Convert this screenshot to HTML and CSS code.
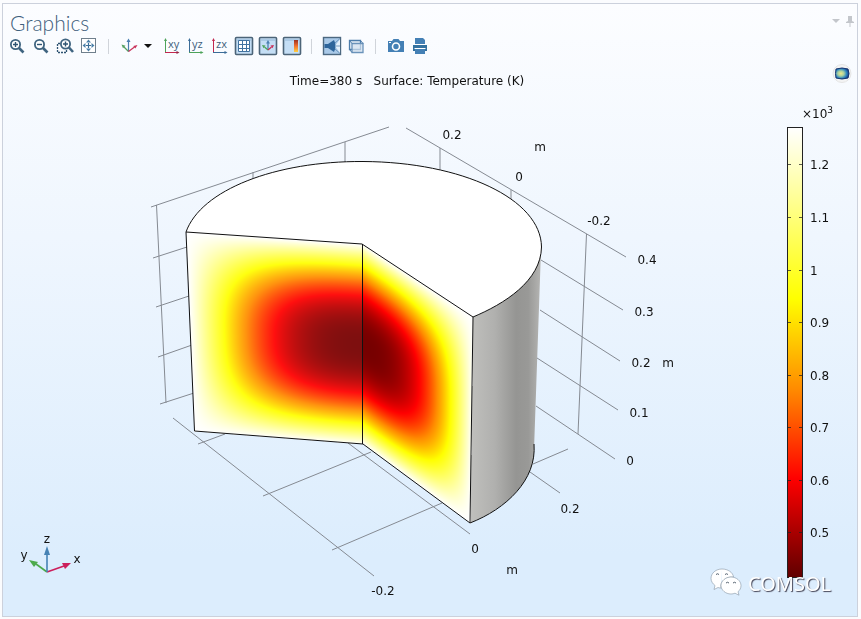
FILE: index.html
```html
<!DOCTYPE html>
<html lang="en">
<head>
  <meta charset="UTF-8">
  <meta name="viewport" content="width=device-width, initial-scale=1.0">
  <title>Graphics</title>
  <link rel="stylesheet" href="styles.css">
</head>
<body>
<section class="panel">
  <header class="head">
    <h1>Graphics</h1>
    <div class="head-tools">
      <button class="mini" aria-label="Panel menu"><svg width="10" height="12" viewBox="0 0 10 12"><path d="M1 4h8L5 8z" fill="#c3c6cb"/></svg></button>
      <button class="mini" aria-label="Pin"><svg width="10" height="12" viewBox="0 0 10 12"><path d="M3 1h4v5l2 1v1H1V7l2-1zM4.500 8h1v4h-1z" fill="#c3c6cb"/></svg></button>
    </div>
  </header>

  <div class="toolbar">
    <button class="tool" aria-label="Zoom in"><svg viewBox="0 0 20 20"><circle cx="8.500" cy="8.500" r="4.600" fill="#fff" stroke="#3f6480" stroke-width="1.800"/><path d="M12 12l4.500 4.500" stroke="#3f6480" stroke-width="2.600"/><path d="M6 8.500h5M8.500 6v5" stroke="#2f5472" stroke-width="1.400"/></svg></button>
    <button class="tool" aria-label="Zoom out"><svg viewBox="0 0 20 20"><circle cx="8.500" cy="8.500" r="4.600" fill="#fff" stroke="#3f6480" stroke-width="1.800"/><path d="M12 12l4.500 4.500" stroke="#3f6480" stroke-width="2.600"/><path d="M6 8.500h5" stroke="#2f5472" stroke-width="1.400"/></svg></button>
    <button class="tool" aria-label="Zoom box"><svg viewBox="0 0 20 20"><path d="M5 7.500H2.500v9h9V14" fill="none" stroke="#2f5472" stroke-width="1.300" stroke-dasharray="2 1"/><circle cx="10.500" cy="8" r="4.600" fill="#fff" stroke="#3f6480" stroke-width="1.800"/><path d="M14 11.500l4 4.500" stroke="#3f6480" stroke-width="2.600"/><path d="M8 8h5M10.500 5.500v5" stroke="#2f5472" stroke-width="1.400"/></svg></button>
    <button class="tool" aria-label="Zoom extents"><svg viewBox="0 0 20 20"><rect x="2.500" y="2.500" width="14" height="14" fill="#fff" stroke="#6f7f8c"/><path d="M9.500 7v5M7 9.500h5" stroke="#3c6f98" stroke-width="1.200"/><path d="M9.500 3.500l2.500 3H7zM9.500 15.500l2.500-3H7zM3.500 9.500l3-2.500v5zM15.500 9.500l-3-2.500v5z" fill="#4a7fa8"/></svg></button>
    <span class="sep"></span>
    <button class="tool" aria-label="Go to default view"><svg viewBox="0 0 20 20"><path d="M9.500 15.500V5" stroke="#4a7fb0" stroke-width="1.200"/><path d="M9.500 2.500l2 3.500h-4z" fill="#4a7fb0"/><path d="M9.500 15.500L5 11" stroke="#55a060" stroke-width="1.200"/><path d="M2.500 8.500l4 1.300-2.500 2.500z" fill="#55a060"/><path d="M9.500 15.500l6-4.500" stroke="#c8325a" stroke-width="1.200"/><path d="M18.500 9l-2.200 3.500-2-2.600z" fill="#c8325a"/></svg></button>
    <button class="caret" aria-label="View menu"><svg width="8" height="6" viewBox="0 0 8 6"><path d="M0 1h8L4 5z" fill="#111"/></svg></button>
    <button class="tool" aria-label="xy view"><svg viewBox="0 0 20 20"><path d="M3.500 4v12" stroke="#4da35a"/><path d="M3.500 2L5 5H2z" fill="#4da35a"/><path d="M3 16.500h12" stroke="#c2284f"/><path d="M17.500 16.500l-3 1.500v-3z" fill="#8f2745"/><text x="6" y="12" class="ico">xy</text></svg></button>
    <button class="tool" aria-label="yz view"><svg viewBox="0 0 20 20"><path d="M3.500 4v12" stroke="#3b6c98"/><path d="M3.500 2L5 5H2z" fill="#3b6c98"/><path d="M3 16.500h12" stroke="#4da35a"/><path d="M17.500 16.500l-3 1.500v-3z" fill="#4da35a"/><text x="6" y="12" class="ico">yz</text></svg></button>
    <button class="tool" aria-label="zx view"><svg viewBox="0 0 20 20"><path d="M3.500 4v12" stroke="#c2284f"/><path d="M3.500 2L5 5H2z" fill="#c2284f"/><path d="M3 16.500h12" stroke="#3b6c98"/><path d="M17.500 16.500l-3 1.500v-3z" fill="#3b6c98"/><text x="6" y="12" class="ico">zx</text></svg></button>
    <button class="tool" aria-label="Show grid" aria-pressed="true"><svg viewBox="0 0 20 20"><use href="#pressed"/><path d="M4.500 4.500h11v11h-11zM8.500 4.500v11M12.500 4.500v11M4.500 8.500h11M4.500 12.500h11" fill="#fff" stroke="#4273a0"/></svg></button>
    <button class="tool" aria-label="Show axis orientation" aria-pressed="true"><svg viewBox="0 0 20 20"><use href="#pressed"/><path d="M10 14V7" stroke="#4a7fb0" stroke-width="1.300"/><path d="M10 4l2 3.500H8z" fill="#4a7fb0"/><path d="M10 14l-3.500-3" stroke="#4da35a" stroke-width="1.300"/><path d="M4 9l3.500.5-2 2.800z" fill="#4da35a"/><path d="M10 14l3.500-3" stroke="#c8325a" stroke-width="1.300"/><path d="M16 9l-3.500.5 2 2.800z" fill="#c8325a"/></svg></button>
    <button class="tool" aria-label="Show legends" aria-pressed="true"><svg viewBox="0 0 20 20"><use href="#pressed"/><rect x="12" y="4" width="4" height="12" fill="url(#legend)"/></svg></button>
    <span class="sep"></span>
    <button class="tool" aria-label="Scene light" aria-pressed="true"><svg viewBox="0 0 20 20"><rect x="1.500" y="1.500" width="17" height="17" fill="#a9c9e8" stroke="#4c6880" stroke-width="1.400"/><path d="M13 10l5-7v14z" fill="#e4f0fb"/><path d="M2.500 8H6l6-4q3 6 0 12l-6-4H2.500z" fill="#2e659b"/><path d="M13 7l4.500-4M14 10h4M13 13l4.500 4" stroke="#5d89b4" stroke-width=".8"/></svg></button>
    <button class="tool" aria-label="Transparency"><svg viewBox="0 0 20 20"><path d="M3.500 4.500h11v9h-11z" fill="#e7eff7" stroke="#4d7dab" stroke-width="1.300"/><path d="M6 7.500h11v9H6z" fill="#d5e3f0" fill-opacity=".7" stroke="#6b93ba" stroke-width="1.300"/><path d="M3.500 4.500L6 7.500M14.500 4.500l2.500 3M3.500 13.500l2.500 3" stroke="#4d7dab"/></svg></button>
    <span class="sep"></span>
    <button class="tool" aria-label="Image snapshot"><svg viewBox="0 0 20 20"><path d="M2 5h4l1.500-2h5L14 5h4v11H2z" fill="#4480b5"/><circle cx="10" cy="10.500" r="3.500" fill="#4480b5" stroke="#fff" stroke-width="1.600"/><path d="M3 6.500h2" stroke="#fff"/></svg></button>
    <button class="tool" aria-label="Print"><svg viewBox="0 0 20 20"><path d="M5 2h8l2 2v4H5z" fill="#4480b5"/><path d="M3 9h14v6H3z" fill="#34719f"/><path d="M4 8.500h12" stroke="#fff"/><path d="M5 12.500h10V18H5z" fill="#4480b5"/><path d="M4.500 12.500h11" stroke="#fff"/></svg></button>
  </div>

  <svg class="plot" viewBox="3 60 854 556" role="img" aria-label="Surface temperature plot">
    <defs>
      <g id="pressed"><rect x="1.500" y="1.500" width="17" height="17" rx="1" fill="#c4def5" stroke="#4c6478" stroke-width="1.600"/><path d="M3 4h14" stroke="#92b6d6"/></g>
      <linearGradient id="legend" x1="0" y1="0" x2="0" y2="1">
        <stop offset="0" stop-color="#9c3022"/><stop offset=".5" stop-color="#f07030"/><stop offset="1" stop-color="#ffd040"/>
      </linearGradient>
      <linearGradient id="thermal" x1="0" y1="0" x2="0" y2="1">
        <stop offset="0" stop-color="#fff"/>
        <stop offset=".38" stop-color="#ff0"/>
        <stop offset=".58" stop-color="#ff8c00"/>
        <stop offset=".78" stop-color="#f00"/>
        <stop offset="1" stop-color="#600000"/>
      </linearGradient>
      <linearGradient id="side" x1="0" y1="0" x2="1" y2="0">
        <stop offset="0" stop-color="#c0c0bd"/>
        <stop offset=".35" stop-color="#b0b0ae"/>
        <stop offset=".65" stop-color="#959593"/>
        <stop offset=".82" stop-color="#999997"/>
        <stop offset="1" stop-color="#b5b5b3"/>
      </linearGradient>
      <radialGradient id="globe" cx=".4" cy=".5" r=".65">
        <stop offset="0" stop-color="#f0e88a"/><stop offset=".35" stop-color="#a8d0a0"/><stop offset=".65" stop-color="#2f86c0"/><stop offset="1" stop-color="#122a78"/>
      </radialGradient>
    </defs>

    <!-- grid -->
    <g class="grid">
      <path d="M151 207L389 127M156.500 205L166 403M253 172v9M345 142v20"/>
      <path d="M153 258L187 247M156 307L189 296M158 357L192 345M160 404L194 393"/>
      <path d="M406 128L626 257M440 148v22M511 190v10M586.500 234L578 434"/>
      <path d="M541 260L623 310M540 310L620 361M537 358L618 410M536 406L615 459"/>
      <path d="M173 418L374 576M198 444L225 434M263 496L371 452M332 550L442 503"/>
      <path d="M348 443L470 534M533 464L568 449M530 472L560 493"/>
    </g>

    <!-- body -->
    <path d="M473 317C505 304 534 281 541 250L534 450C535 480 506 509 470 523z" fill="url(#side)"/>
    <foreignObject x="180" y="225" width="300" height="305"><canvas id="field" width="300" height="305"></canvas></foreignObject>
    <path class="edge" fill="#fff" d="M186 232C201 190 275 161 363 161.500C462 162 541 199 541.500 247C541 281 504 304 473 317L362 244z"/>
    <path class="edge" fill="none" d="M186 232L194.500 431L363 444L470 523L473 317M362.500 244V444M470 523C506 509 537 480 534 444"/>

    <!-- axis labels -->
    <g class="label mid">
      <text x="407" y="85" class="caption">Time=380 s   Surface: Temperature (K)</text>
      <text x="452" y="139">0.2</text>
      <text x="540" y="151">m</text>
      <text x="519" y="181">0</text>
      <text x="599" y="225">-0.2</text>
      <text x="647" y="264">0.4</text>
      <text x="644" y="316">0.3</text>
      <text x="641" y="367">0.2</text>
      <text x="668" y="367">m</text>
      <text x="639" y="417">0.1</text>
      <text x="630" y="465">0</text>
      <text x="570" y="513">0.2</text>
      <text x="475" y="553">0</text>
      <text x="512" y="574">m</text>
      <text x="383" y="595">-0.2</text>
      <text x="24" y="559">y</text>
      <text x="47" y="543">z</text>
      <text x="77" y="563">x</text>
    </g>

    <!-- orientation triad -->
    <g stroke-width="1.600">
      <path d="M47 572L36 564" stroke="#4caa4c"/><path d="M29 560l9 2-4 5z" fill="#4caa4c"/>
      <path d="M47 572l17-6" stroke="#cc1f5c"/><path d="M71 563l-9 0 3 6z" fill="#cc1f5c"/>
      <path d="M47 572V554" stroke="#4682b4"/><path d="M47 546l3 9h-6z" fill="#4682b4"/>
    </g>

    <!-- colour legend -->
    <rect x="787.500" y="127.500" width="15" height="450" fill="url(#thermal)" stroke="#222"/>
    <path class="tick" d="M788 164.500h3m8 0h3M788 217.500h3m8 0h3M788 270.500h3m8 0h3M788 322.500h3m8 0h3M788 375.500h3m8 0h3M788 427.500h3m8 0h3M788 480.500h3m8 0h3M788 532.500h3m8 0h3"/>
    <g class="label">
      <text x="802" y="118">×10<tspan dy="-5" class="sup">3</tspan></text>
      <text x="810" y="169">1.2</text>
      <text x="810" y="222">1.1</text>
      <text x="810" y="275">1</text>
      <text x="810" y="327">0.9</text>
      <text x="810" y="380">0.8</text>
      <text x="810" y="432">0.7</text>
      <text x="810" y="485">0.6</text>
      <text x="810" y="537">0.5</text>
    </g>

    <circle cx="842" cy="73.500" r="9" fill="#f4f4f4" stroke="#e4e4e4"/>
    <path d="M836 69q6-2 12 0 2 4.500 0 9-6 2-12 0-1-4.500 0-9z" fill="url(#globe)" stroke="#17356f"/>

    <g class="mark">
      <path d="M722 569c-6 0-11 4-11 9.500 0 3 2 5.500 4 7l-1 4 4-2q2 .8 4 .5M722 569c6 0 11 3.500 11.500 8-8-.5-14 5-12.500 11"/>
      <path d="M731 577c-5.500 0-10 4-10 8.500s4.500 8.500 10 8.500q2 0 4-.8l4 2-1-3.500c2-1.500 3-3.700 3-6.200 0-4.500-4.500-8.500-10-8.500z"/>
      <path class="eyes" d="M716 574.500q1.500-1.500 3 0M725 574.500q1.500-1.500 3 0M726 583q1.500-1.500 3 0M733 583q1.500-1.500 3 0"/>
      <text x="748" y="591">COMSOL</text>
    </g>
  </svg>
</section>
<script src="field.js"></script>
</body>
</html>
```

FILE: styles.css
```css
*{
  box-sizing:border-box;
}
body{
  margin:0;
  padding:3px 3px 2px 2px;
  background-color:#fbfcfe;
  font-family:"Open Sans", sans-serif;
}
.panel{
  border:1px solid #ccd1dc;
  background:linear-gradient(#fcfdff, #eff6fe 38%, #dcedfd 90%);
}
.head{
  display:flex;
  justify-content:space-between;
  height:32px;
  padding:5px 2px 0 7px;
}
h1{
  margin:0;
  font-family:Lato, "Open Sans", sans-serif;
  font-size:21px;
  line-height:28px;
  font-weight:300;
  color:#3f607c;
}
button{
  display:flex;
  align-items:center;
  justify-content:center;
  margin:0;
  padding:0;
  border:0;
  background:none;
}
.head-tools{
  display:flex;
  align-items:flex-start;
  gap:4px;
  padding-top:6px;
}
.toolbar{
  display:flex;
  align-items:center;
  height:24px;
  padding:0 2px 4px;
}
.tool{
  width:24px;
  height:20px;
}
.tool svg{
  width:20px;
  height:20px;
}
.caret{
  width:14px;
  height:20px;
  margin-right:5px;
}
.sep{
  width:1px;
  height:15px;
  margin:0 8px 0 7px;
  background-color:#d0d4da;
}
.ico{
  font:11px "Open Sans", sans-serif;
  fill:#3f5f7c;
}
.plot{
  display:block;
  width:100%;
  height:auto;
}
#field{
  display:block;
}
.grid{
  fill:none;
  stroke:#858a92;
}
.edge{
  stroke:#111;
  stroke-width:1px;
  stroke-linejoin:round;
}
.tick{
  stroke:#222;
  stroke-opacity:.75;
}
.label{
  font:12px "DejaVu Sans", sans-serif;
  fill:#111;
}
.mid{
  text-anchor:middle;
}
.caption{
  white-space:pre;
}
.sup{
  font-size:9px;
}
.mark{
  fill:#fff;
  stroke:#8594a3;
  stroke-width:.6px;
}
.mark text{
  font:20px "Noto Sans", sans-serif;
  stroke:none;
  text-shadow:1px 1px 1px #445;
}
.mark .eyes{
  fill:none;
  stroke:#556270;
  stroke-width:1px;
}
```

FILE: field.js
```js
// temperature on the two cut faces of the cylinder
var canvas = document.getElementById("field");
var ctx = canvas.getContext("2d");
var img = ctx.createImageData(canvas.width, canvas.height);
var stops = [
  [0, 255, 255, 255],
  [0.38, 255, 255, 0],
  [0.58, 255, 140, 0],
  [0.78, 255, 0, 0],
  [1, 96, 0, 0]
];

function color(f) {
  for (var i = 1; i < stops.length; i++) {
    if (f <= stops[i][0]) {
      var a = stops[i - 1], b = stops[i];
      var k = (f - a[0]) / (b[0] - a[0]);
      return [1, 2, 3].map(function (c) { return a[c] + (b[c] - a[c]) * k; });
    }
  }
  return stops[4].slice(1);
}

function profile(s, power) {
  return Math.cos(Math.PI / 2 * Math.pow(Math.min(Math.abs(s), 1), power));
}

// every face: x range, then the lines of its top, bottom and outer edge
function face(from, to, top, bottom, outer, haze) {
  for (var x = from; x < to; x++) {
    var yt = top(x), yb = bottom(x);
    for (var y = Math.floor(yt); y <= yb; y++) {
      var v = (y - yt) / (yb - yt);
      var u = (x - 362.5) / (outer(y) - 362.5);
      if (u > 1 || u < 0) continue;
      var rgb = color(0.97 * profile(u, 1.35) * profile(2 * v - 1, 1.25));
      var p = ((y - 225) * canvas.width + (x - 180)) * 4;
      for (var c = 0; c < 3; c++) {
        img.data[p + c] = rgb[c] + (255 - rgb[c]) * haze;
      }
      img.data[p + 3] = 255;
    }
  }
}

function line(x1, y1, x2, y2) {
  return function (x) { return y1 + (y2 - y1) * (x - x1) / (x2 - x1); };
}

face(186, 363, line(186, 232, 362, 244), line(194, 431, 363, 444), line(232, 186, 431, 194), 0.06);
face(363, 473, line(362, 244, 473, 317), line(363, 444, 470, 523), line(317, 473, 523, 470), 0);
ctx.putImageData(img, 0, 0);
```
